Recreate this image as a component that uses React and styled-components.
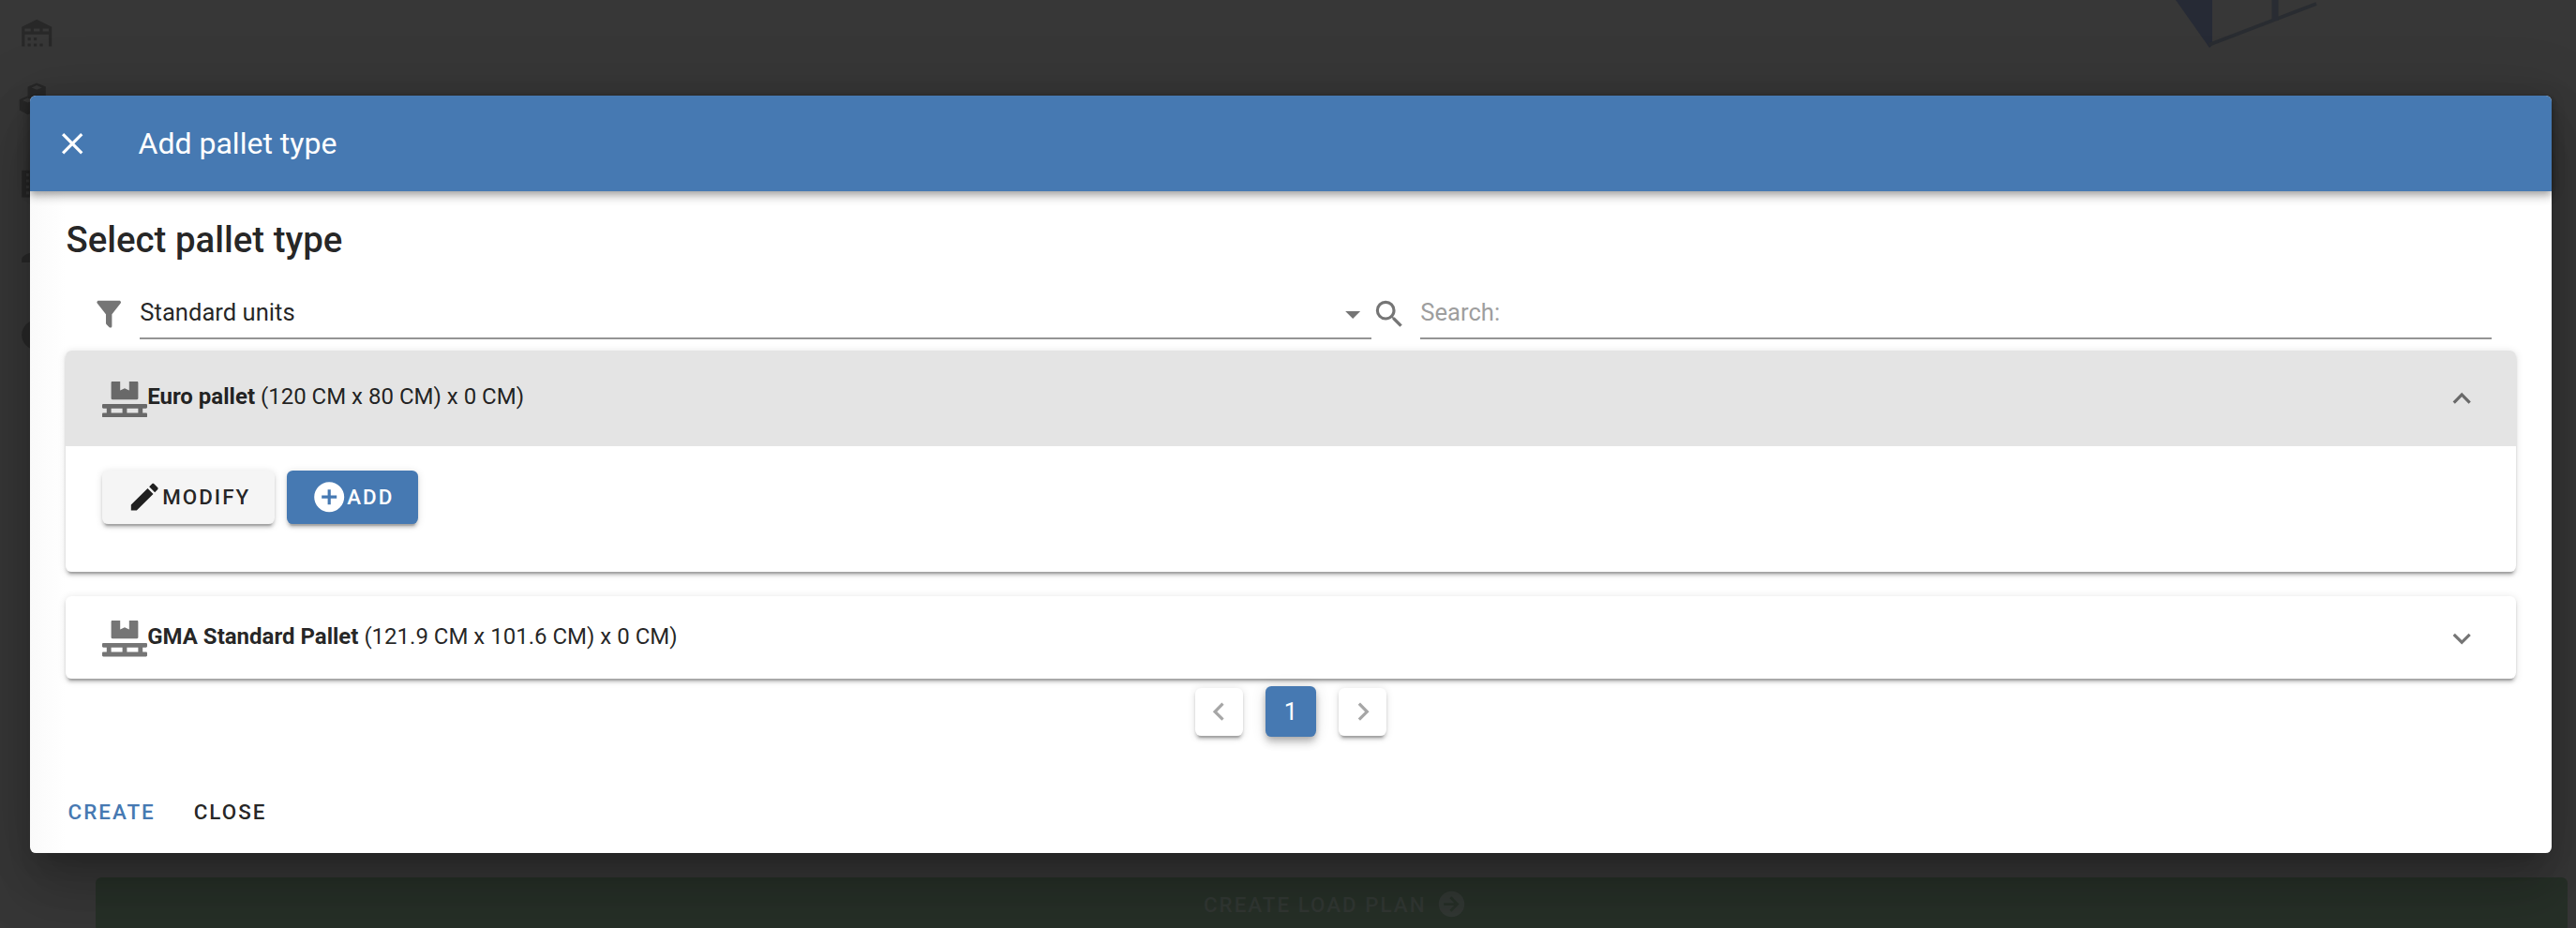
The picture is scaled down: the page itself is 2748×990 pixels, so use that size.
import styled, { createGlobalStyle } from "styled-components";
import { FaPallet } from "react-icons/fa";

const GlobalStyle = createGlobalStyle`
  * {
    box-sizing: border-box;
  }

  body {
    margin: 0;
    font-family: Roboto, "Liberation Sans", sans-serif;
    font-size: 25.6px;
    line-height: 1.5;
    color: rgba(0, 0, 0, 0.87);
    background-color: #373737;
    overflow: hidden;
  }
`;

const elevation2 =
  "0 4.8px 1.6px -3.2px rgba(0,0,0,.2), 0 3.2px 3.2px 0 rgba(0,0,0,.14), 0 1.6px 8px 0 rgba(0,0,0,.12)";
const elevation4 =
  "0 3.2px 6.4px -1.6px rgba(0,0,0,.2), 0 6.4px 8px 0 rgba(0,0,0,.14), 0 1.6px 16px 0 rgba(0,0,0,.12)";
const elevation24 =
  "0 17.6px 24px -11.2px rgba(0,0,0,.2), 0 38.4px 60.8px 4.8px rgba(0,0,0,.14), 0 14.4px 73.6px 12.8px rgba(0,0,0,.12)";

const Page = styled.div`
  position: relative;
  display: flex;
  width: 100%;
  height: 990px;
  overflow: hidden;
`;

const SideNav = styled.nav`
  display: flex;
  flex-direction: column;
  align-items: center;
  gap: 51.6px;
  width: 78px;
  padding-top: 16px;
  color: #282828;
`;

const NavGroup = styled.div`
  display: flex;
  flex-direction: column;
  gap: 32.6px;
`;

const Workspace = styled.main`
  flex: 1;
  display: flex;
  flex-direction: column;
  justify-content: space-between;
  padding: 0 9px 0 24px;
`;

const Wireframe = styled.svg`
  display: block;
  margin-left: 2218px;
`;

const LoadPlanButton = styled.button`
  display: flex;
  align-items: center;
  justify-content: center;
  gap: 10.5px;
  height: 57.6px;
  margin-bottom: -3.6px;
  padding: 0 0 0 8px;
  border: 0;
  border-radius: 6.4px;
  background-color: #273028;
  color: #323834;
  font: 500 22.4px Roboto, sans-serif;
  letter-spacing: 2px;
`;

const Dialog = styled.section`
  position: absolute;
  top: 102px;
  left: 32px;
  display: flex;
  flex-direction: column;
  width: 2690px;
  height: 808px;
  border-radius: 6.4px;
  background: linear-gradient(90deg, #fafafa, #fff 38px);
  box-shadow: ${elevation24};
`;

const Toolbar = styled.header`
  display: flex;
  align-items: center;
  gap: 51.6px;
  height: 102px;
  flex-shrink: 0;
  padding: 0 25.6px;
  border-radius: 6.4px 6.4px 0 0;
  background-color: #4679b2;
  color: #fff;
  box-shadow: ${elevation4};
`;

const Title = styled.div`
  font-size: 32px;
`;

const Content = styled.div`
  flex: 1;
  display: flex;
  flex-direction: column;
  padding: 24px 38.4px 0;
`;

const Heading = styled.h2`
  margin: 0;
  font-size: 38.4px;
  font-weight: 500;
  line-height: 56px;
`;

const Filters = styled.div`
  display: flex;
  padding: 22px 25.6px 0 26.2px;
`;

const Field = styled.label`
  display: flex;
  gap: 14.4px;
  width: ${(props) => props.$width};
  color: rgba(0, 0, 0, 0.54);
`;

const FieldIcon = styled.span`
  display: flex;
  padding-top: 10px;
`;

const FieldInput = styled.div`
  flex: 1;
  display: flex;
  justify-content: space-between;
  height: 56px;
  padding-top: 8px;
  border-bottom: 2px solid #949494;
  color: ${(props) => (props.$placeholder ? "#9e9e9e" : "rgba(0,0,0,.87)")};
`;

const MenuArrow = styled.span`
  display: flex;
  padding-top: 2px;
  color: rgba(0, 0, 0, 0.54);
`;

const Panels = styled.div`
  display: flex;
  flex-direction: column;
  gap: 25.6px;
  margin-top: 12px;
`;

const Panel = styled.div`
  border-radius: 6.4px;
  background-color: #fff;
  box-shadow: ${elevation2};
`;

const PanelHeader = styled.div`
  display: flex;
  align-items: center;
  height: ${(props) => (props.$open ? "102.4px" : "88.4px")};
  padding: ${(props) => (props.$open ? "0" : "2px")} 38.4px 0 38.8px;
  border-radius: ${(props) => (props.$open ? "6.4px 6.4px 0 0" : "6.4px")};
  background-color: ${(props) => (props.$open ? "#e4e4e4" : "transparent")};
  color: rgba(0, 0, 0, 0.54);
`;

const PalletIcon = styled(FaPallet)`
  width: 48px;
  height: 38.4px;
  margin-top: 1px;
`;

const PanelText = styled.span`
  flex: 1;
  padding-bottom: 5px;
  font-size: 24px;
  color: rgba(0, 0, 0, 0.87);
`;

const PanelBody = styled.div`
  display: flex;
  gap: 13.5px;
  height: 134px;
  padding: 25.6px 38.8px 0;
`;

const Button = styled.button`
  display: flex;
  align-items: center;
  height: 56.6px;
  padding: 0 25.6px;
  border: 0;
  border-radius: 6.4px;
  background-color: ${(props) => (props.$primary ? "#4679b2" : "#f5f5f5")};
  color: ${(props) => (props.$primary ? "#fff" : "rgba(0,0,0,.87)")};
  font: 500 22.4px Roboto, sans-serif;
  letter-spacing: 2px;
  box-shadow: ${elevation2};
`;

const Pagination = styled.div`
  display: flex;
  align-items: center;
  justify-content: center;
  gap: 24px;
  margin-top: 7.6px;
`;

const PageButton = styled.button`
  display: flex;
  align-items: center;
  justify-content: center;
  width: ${(props) => (props.$active ? "54.4px" : "51.2px")};
  height: ${(props) => (props.$active ? "54.4px" : "51.2px")};
  padding: 0;
  border: 0;
  border-radius: 6.4px;
  background-color: ${(props) => (props.$active ? "#4679b2" : "#fff")};
  color: ${(props) => (props.$active ? "#fff" : "#a6a6a6")};
  font: 25.6px Roboto, sans-serif;
  box-shadow: ${(props) => (props.$active ? elevation4 : elevation2)};
`;

const Actions = styled.footer`
  display: flex;
  gap: 41px;
  padding: 0 0 28px 40.6px;
`;

const TextButton = styled.button`
  padding: 0;
  border: 0;
  background: none;
  color: ${(props) => (props.$primary ? "#4679b2" : "rgba(0,0,0,.87)")};
  font: 500 22.4px/32px Roboto, sans-serif;
  letter-spacing: 2px;
`;

const icons = {
  close:
    "M19,6.41L17.59,5L12,10.59L6.41,5L5,6.41L10.59,12L5,17.59L6.41,19L12,13.41L17.59,19L19,17.59L13.41,12L19,6.41Z",
  filter:
    "M14,12V19.88C14.04,20.18 13.94,20.5 13.71,20.71C13.32,21.1 12.69,21.1 12.3,20.71L10.29,18.7C10.06,18.47 9.96,18.16 10,17.87V12H9.97L4.21,4.62C3.87,4.19 3.95,3.56 4.38,3.22C4.57,3.08 4.78,3 5,3H19C19.22,3 19.43,3.08 19.62,3.22C20.05,3.56 20.13,4.19 19.79,4.62L14.03,12H14Z",
  menuDown: "M7,10L12,15L17,10H7Z",
  magnify:
    "M9.5,3A6.5,6.5 0 0,1 16,9.5C16,11.11 15.41,12.59 14.44,13.73L14.71,14H15.5L20.5,19L19,20.5L14,15.5V14.71L13.73,14.44C12.59,15.41 11.11,16 9.5,16A6.5,6.5 0 0,1 3,9.5A6.5,6.5 0 0,1 9.5,3M9.5,5C7,5 5,7 5,9.5C5,12 7,14 9.5,14C12,14 14,12 14,9.5C14,7 12,5 9.5,5Z",
  chevronUp: "M7.41,15.41L12,10.83L16.59,15.41L18,14L12,8L6,14L7.41,15.41Z",
  chevronDown: "M7.41,8.58L12,13.17L16.59,8.58L18,10L12,16L6,10L7.41,8.58Z",
  chevronLeft: "M15.41,16.58L10.83,12L15.41,7.41L14,6L8,12L14,18L15.41,16.58Z",
  chevronRight: "M8.59,16.58L13.17,12L8.59,7.41L10,6L16,12L10,18L8.59,16.58Z",
  pencil:
    "M20.71,7.04C21.1,6.65 21.1,6 20.71,5.63L18.37,3.29C18,2.9 17.35,2.9 16.96,3.29L15.12,5.12L18.87,8.87M3,17.25V21H6.75L17.81,9.93L14.06,6.18L3,17.25Z",
  plusCircle:
    "M17,13H13V17H11V13H7V11H11V7H13V11H17M12,2A10,10 0 0,0 2,12A10,10 0 0,0 12,22A10,10 0 0,0 22,12A10,10 0 0,0 12,2Z",
  arrowCircle:
    "M2,12A10,10 0 0,1 12,2A10,10 0 0,1 22,12A10,10 0 0,1 12,22A10,10 0 0,1 2,12M6,13H14L10.5,16.5L11.92,17.92L17.84,12L11.92,6.08L10.5,7.5L14,11H6V13Z",
  warehouse:
    "M6,19H8V21H6V19M12,3L2,8V21H4V13H20V21H22V8L12,3M8,11H4V9H8V11M14,11H10V9H14V11M20,11H16V9H20V11M6,15H8V17H6V15M10,15H12V17H10V15M10,19H12V21H10V19M14,19H16V21H14V19Z",
  boxes:
    "M12,1L18,3.5V10L22,12V19L16,22L11,19.5L6,22L0.5,19V12L6,9.5V3.5L12,1M12,2.5L8.5,4L12,5.5L15.5,4L12,2.5M6,11L2.5,12.5L6,14L9.5,12.5L6,11Z",
  building:
    "M2,3H22V21H2V3M5,5V7H7V5H5M9,5V7H11V5H9M5,9V11H7V9H5M9,9V11H11V9H9M5,13V15H7V13H5M9,13V15H11V13H9M5,17V19H7V17H5Z",
  account:
    "M12,4A4,4 0 0,1 16,8A4,4 0 0,1 12,12A4,4 0 0,1 8,8A4,4 0 0,1 12,4M12,13C17,13 22,15.5 22,18V20H2V18C2,15.5 7,13 12,13Z",
  circle: "M12,2A10,10 0 1,0 12,22A10,10 0 1,0 12,2Z",
};

const Icon = ({ name, size = 38.4 }) => (
  <svg width={size} height={size} viewBox="0 0 24 24" fill="currentColor">
    <path fillRule="evenodd" d={icons[name]} />
  </svg>
);

const pallets = [
  { name: "Euro pallet", size: "(120 CM x 80 CM) x 0 CM)", open: true },
  { name: "GMA Standard Pallet", size: "(121.9 CM x 101.6 CM) x 0 CM)", open: false },
];

const PalletPanel = ({ name, size, open }) => (
  <Panel>
    <PanelHeader $open={open}>
      <PalletIcon />
      <PanelText>
        <b>{name}</b> {size}
      </PanelText>
      <Icon name={open ? "chevronUp" : "chevronDown"} />
    </PanelHeader>
    {open && (
      <PanelBody>
        <Button>
          <Icon name="pencil" />
          MODIFY
        </Button>
        <Button $primary>
          <Icon name="plusCircle" />
          ADD
        </Button>
      </PanelBody>
    )}
  </Panel>
);

const App = () => {
  return (
    <Page>
      <GlobalStyle />
      <SideNav>
        <NavGroup>
          <Icon name="warehouse" />
          <Icon name="boxes" />
        </NavGroup>
        <NavGroup>
          <Icon name="building" />
          <Icon name="account" />
        </NavGroup>
        <Icon name="circle" />
      </SideNav>
      <Workspace>
        <Wireframe width="160" height="56" viewBox="0 0 160 56">
          <path d="M1 0H40V48L37 51Z" fill="#262a35" />
          <path d="M36 48L151 4" stroke="#292c31" strokeWidth="4" fill="none" />
          <path d="M107 0V22" stroke="#292c33" strokeWidth="7" fill="none" />
        </Wireframe>
        <LoadPlanButton>
          CREATE LOAD PLAN
          <Icon name="arrowCircle" size={33} />
        </LoadPlanButton>
      </Workspace>
      <Dialog>
        <Toolbar>
          <Icon name="close" />
          <Title>Add pallet type</Title>
        </Toolbar>
        <Content>
          <Heading>Select pallet type</Heading>
          <Filters>
            <Field $width="1366px">
              <FieldIcon>
                <Icon name="filter" />
              </FieldIcon>
              <FieldInput>
                Standard units
                <MenuArrow>
                  <Icon name="menuDown" />
                </MenuArrow>
              </FieldInput>
            </Field>
            <Field $width="1195.6px">
              <FieldIcon>
                <Icon name="magnify" />
              </FieldIcon>
              <FieldInput $placeholder>Search:</FieldInput>
            </Field>
          </Filters>
          <Panels>
            {pallets.map((pallet) => (
              <PalletPanel key={pallet.name} {...pallet} />
            ))}
          </Panels>
          <Pagination>
            <PageButton>
              <Icon name="chevronLeft" />
            </PageButton>
            <PageButton $active>1</PageButton>
            <PageButton>
              <Icon name="chevronRight" />
            </PageButton>
          </Pagination>
        </Content>
        <Actions>
          <TextButton $primary>CREATE</TextButton>
          <TextButton>CLOSE</TextButton>
        </Actions>
      </Dialog>
    </Page>
  );
};

export default App;
